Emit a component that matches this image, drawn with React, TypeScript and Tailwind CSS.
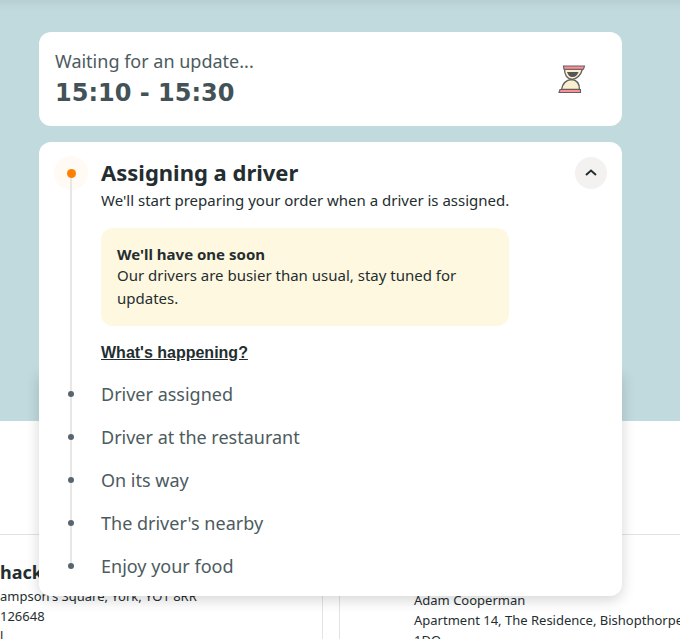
import { ReactNode } from "react";

const steps = [
  "Driver assigned",
  "Driver at the restaurant",
  "On its way",
  "The driver's nearby",
  "Enjoy your food",
];

function Hourglass() {
  return (
    <svg width="28" height="30" viewBox="0 -1 28 30" className="mr-5 shrink-0" role="img" aria-label="Hourglass">
      <path d="M6.500 4C6.500 10 8.500 13.500 14 14.500C20 13.500 23 9.500 24.500 4Z" fill="#faf0cf" stroke="#606060" strokeWidth="1.300" />
      <path d="M13.500 14.500C8 15 4.500 19 3.500 24.500H21.500C21.500 19 19 15 13.500 14.500Z" fill="#faf0cf" stroke="#606060" strokeWidth="1.300" />
      <path d="M9 7H20.500C19.500 10 17.500 12 14.500 12S10 10 9 7Z" fill="#565656" />
      <path d="M5.500 1H26.500L25.500 4.300H6Z" fill="#ff8e98" stroke="#606060" strokeWidth="1.100" />
      <path d="M2 24.500H22.500V27.500H1Z" fill="#ff8e98" stroke="#606060" strokeWidth="1.100" />
    </svg>
  );
}

function Rail({ children }: { children: ReactNode }) {
  return <div className="flex w-[34px] shrink-0 flex-col items-center self-stretch">{children}</div>;
}

function OrderPage() {
  return (
    <div className="col-start-1 row-start-1 min-w-0">
      <div className="h-[421px] bg-[#c1dade]">
        <div className="h-2.5 bg-linear-to-b from-[#b7cfd3] to-[#c1dade]" />
      </div>
      <div className="mt-[113px] flex gap-4 text-[13px] leading-5 text-[#242e30]">
        <section className="w-[323px] shrink-0 border-t border-r border-[#e5e3dc] pt-[25px]">
          <h2 className="mb-0.5 text-lg leading-6 font-bold">hack</h2>
          <p>ampson's Square, York, YO1 8RR</p>
          <p>126648</p>
          <p>l</p>
        </section>
        <section className="min-w-0 flex-1 border-t border-l border-[#e5e3dc] pt-[55px] pl-[74px]">
          <p>Adam Cooperman</p>
          <p className="whitespace-nowrap">Apartment 14, The Residence, Bishopthorpe</p>
          <p>1DQ</p>
        </section>
      </div>
    </div>
  );
}

export default function App() {
  return (
    <div className="grid h-screen grid-cols-1 overflow-hidden bg-white font-['Noto_Sans',sans-serif]">
      <OrderPage />
      <main className="z-10 col-start-1 row-start-1 flex flex-col gap-4 self-start pt-8 pr-[58px] pl-[39px]">
        <section className="flex items-center justify-between rounded-xl bg-white px-4 py-[15px]">
          <div>
            <p className="text-lg leading-7 text-[#4c5b60]">Waiting for an update...</p>
            <p className="font-['DejaVu_Sans',sans-serif] text-2xl leading-9 font-bold text-[#425257]">15:10 - 15:30</p>
          </div>
          <Hourglass />
        </section>
        <section>
          <div className="relative z-10 flex gap-[13px] rounded-t-xl bg-white px-[15px] pt-[14px]">
            <Rail>
              <div className="flex size-[34px] items-center justify-center rounded-full bg-[#fffaf4]">
                <span className="size-[9px] rounded-full bg-[#ff8000]" />
              </div>
              <span className="-mt-3 w-0.5 flex-1 bg-[#e9e7e5]" />
            </Rail>
            <div className="min-w-0 flex-1 pb-2">
              <div className="flex items-start justify-between">
                <div>
                  <h1 className="text-[22px] leading-8 font-bold text-[#242e30]">Assigning a driver</h1>
                  <p className="text-[15px] leading-6 text-[#242e30]">
                    We'll start preparing your order when a driver is assigned.
                  </p>
                </div>
                <button aria-label="Collapse" className="mt-px flex size-8 shrink-0 items-center justify-center rounded-full bg-[#f3f2f1]">
                  <svg width="12" height="12" viewBox="0 0 12 12" fill="none" aria-hidden="true">
                    <path d="M1 8L6 3.500L11 8" stroke="#242e30" strokeWidth="2" />
                  </svg>
                </button>
              </div>
              <div className="mt-4 w-full max-w-[408px] rounded-xl bg-[#fff8e0] p-4 text-[15px] leading-[23px] text-[#242e30]">
                <p className="leading-5 font-bold">We'll have one soon</p>
                <p>Our drivers are busier than usual, stay tuned for updates.</p>
              </div>
              <a href="#help" className="mt-4 block w-fit font-['Liberation_Sans',sans-serif] text-base leading-[22px] font-bold text-[#242e30] underline">
                What's happening?
              </a>
            </div>
          </div>
          <ol className="rounded-b-xl bg-white px-[15px] pb-[9px] shadow-[0_4px_14px_rgba(0,0,0,0.17)]">
            {steps.map((step, i) => (
              <li key={step} className="flex h-[43px] items-center gap-[13px]">
                <Rail>
                  <span className="w-0.5 flex-1 bg-[#e9e7e5]" />
                  <span className="size-1.5 rounded-full bg-[#566570]" />
                  <span className={i === steps.length - 1 ? "flex-1" : "w-0.5 flex-1 bg-[#e9e7e5]"} />
                </Rail>
                <p className="text-lg text-[#4c5b60]">{step}</p>
              </li>
            ))}
          </ol>
        </section>
      </main>
    </div>
  );
}
